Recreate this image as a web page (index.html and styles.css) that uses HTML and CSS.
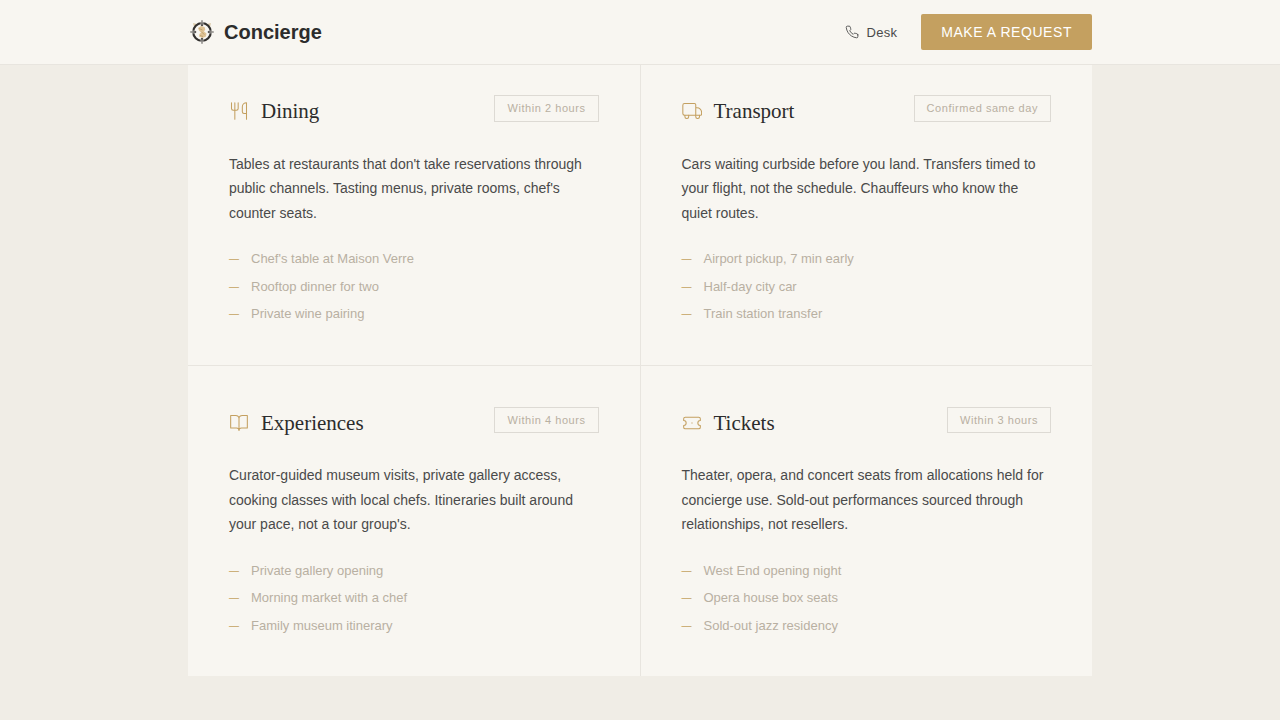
FILE: index.html
```html
<!DOCTYPE html>
<html lang="en">
<head>
    <meta charset="UTF-8">
    <meta name="viewport" content="width=device-width,initial-scale=1">
    <title>Concierge</title>
    <link rel="stylesheet" href="styles.css">
</head>
<body>
    <header class="header">
        <div class="header-inner">
            <a class="brand" href="#">
                <svg class="brand-mark" viewBox="0 0 28 28" aria-hidden="true">
                    <path d="M5 5l4 1-3 3zM23 5l-4 1 3 3z" fill="#dccbaa"/>
                    <circle cx="14" cy="14" r="8.800" fill="none" stroke="#33312f" stroke-width="2.200"/>
                    <path d="M14 3v6M14 19v6M3 14h6M19 14h6" stroke="#f8f6f1" stroke-width="2.600"/>
                    <path d="M14 2l.8 6h-1.600zM14 26l.8-6h-1.600zM2 14l6-.8v1.600zM26 14l-6-.8v1.600z" fill="#33312f" stroke="#33312f" stroke-width=".3"/>
                    <path d="M10 10l3-2 3.500 1 .8 2.500-1.300 2 2.500 2-.5 3-3.500 1.500-3.500-1.500.5-2.500 1.500-1.500-2-2z" fill="#dfc395"/>
                    <path d="M11 10.500l3.500 1.500M13.500 14l3 2.500M12 17.500l3 1" stroke="#b99a68" stroke-width=".8"/>
                </svg>
                <span>Concierge</span>
            </a>
            <nav class="nav">
                <a class="desk" href="#">
                    <svg class="icon-phone" viewBox="0 0 24 24" aria-hidden="true"><path d="M22 16.920v3a2 2 0 0 1-2.180 2 19.790 19.790 0 0 1-8.630-3.070 19.500 19.500 0 0 1-6-6 19.790 19.790 0 0 1-3.070-8.670A2 2 0 0 1 4.110 2h3a2 2 0 0 1 2 1.720c.127.960.361 1.903.7 2.810a2 2 0 0 1-.45 2.110L8.090 9.910a16 16 0 0 0 6 6l1.270-1.270a2 2 0 0 1 2.110-.45c.907.339 1.850.573 2.810.7A2 2 0 0 1 22 16.920z"/></svg>
                    <span>Desk</span>
                </a>
                <button class="btn" type="button">Make a request</button>
            </nav>
        </div>
    </header>

    <main class="services">
        <article class="card">
            <div class="card-head">
                <h2 class="card-title">
                    <svg class="icon" viewBox="0 0 24 24" aria-hidden="true"><path d="M3 2v7c0 1.100.9 2 2 2h4a2 2 0 0 0 2-2V2M7 2v20M21 15V2a5 5 0 0 0-5 5v6c0 1.100.9 2 2 2h3zm0 0v7"/></svg>
                    Dining
                </h2>
                <span class="badge">Within 2 hours</span>
            </div>
            <p class="card-text">Tables at restaurants that don't take reservations through public channels. Tasting menus, private rooms, chef's counter seats.</p>
            <ul class="card-list">
                <li>Chef's table at Maison Verre</li>
                <li>Rooftop dinner for two</li>
                <li>Private wine pairing</li>
            </ul>
        </article>

        <article class="card">
            <div class="card-head">
                <h2 class="card-title">
                    <svg class="icon" viewBox="0 0 24 24" aria-hidden="true"><path d="M3 17a2 2 0 0 1-2-2V5a2 2 0 0 1 2-2h12a1.500 1.500 0 0 1 1.500 1.500V17H3zM16.500 8H18a5.500 5.500 0 0 1 5.500 5.500V16a1 1 0 0 1-1 1h-6"/><path d="M3.500 17v2a2 2 0 0 0 2 2h.5a2 2 0 0 0 2-2v-2M16.500 17v2a2 2 0 0 0 2 2h.5a2 2 0 0 0 2-2v-2"/></svg>
                    Transport
                </h2>
                <span class="badge">Confirmed same day</span>
            </div>
            <p class="card-text">Cars waiting curbside before you land. Transfers timed to your flight, not the schedule. Chauffeurs who know the quiet routes.</p>
            <ul class="card-list">
                <li>Airport pickup, 7 min early</li>
                <li>Half-day city car</li>
                <li>Train station transfer</li>
            </ul>
        </article>

        <article class="card">
            <div class="card-head">
                <h2 class="card-title">
                    <svg class="icon" viewBox="0 0 24 24" aria-hidden="true"><path d="M2 3h6a4 4 0 0 1 4 4v14a3 3 0 0 0-3-3H2zM22 3h-6a4 4 0 0 0-4 4v14a3 3 0 0 1 3-3h7z"/></svg>
                    Experiences
                </h2>
                <span class="badge">Within 4 hours</span>
            </div>
            <p class="card-text">Curator-guided museum visits, private gallery access, cooking classes with local chefs. Itineraries built around your pace, not a tour group's.</p>
            <ul class="card-list">
                <li>Private gallery opening</li>
                <li>Morning market with a chef</li>
                <li>Family museum itinerary</li>
            </ul>
        </article>

        <article class="card">
            <div class="card-head">
                <h2 class="card-title">
                    <svg class="icon" viewBox="0 0 24 24" aria-hidden="true"><path d="M2 9a3 3 0 0 1 0 6v2a2 2 0 0 0 2 2h16a2 2 0 0 0 2-2v-2a3 3 0 0 1 0-6V7a2 2 0 0 0-2-2H4a2 2 0 0 0-2 2z"/><path d="M12 11.500v1" opacity=".6"/></svg>
                    Tickets
                </h2>
                <span class="badge">Within 3 hours</span>
            </div>
            <p class="card-text">Theater, opera, and concert seats from allocations held for concierge use. Sold-out performances sourced through relationships, not resellers.</p>
            <ul class="card-list">
                <li>West End opening night</li>
                <li>Opera house box seats</li>
                <li>Sold-out jazz residency</li>
            </ul>
        </article>
    </main>
</body>
</html>
```

FILE: styles.css
```css
* {
    box-sizing: border-box;
}
body {
    margin: 0;
    background: #f0ede6;
    color: #4a4a4a;
    font-family: "Liberation Sans", Arial, sans-serif;
    font-size: 14px;
}
a {
    color: inherit;
    text-decoration: none;
}
svg {
    fill: none;
    stroke-linecap: round;
    stroke-linejoin: round;
    flex-shrink: 0;
}

/* header */
.header {
    position: sticky;
    top: 0;
    z-index: 10;
    background: #f8f6f1;
    border-bottom: 1px solid #e8e5df;
}
.header-inner {
    display: flex;
    align-items: center;
    justify-content: space-between;
    max-width: 904px;
    height: 64px;
    margin: 0 auto;
}
.brand {
    display: flex;
    align-items: center;
    gap: 8px;
    color: #2c2c2c;
    font-size: 20px;
    font-weight: bold;
}
.brand-mark {
    width: 28px;
    height: 28px;
    stroke-linecap: butt;
}
.nav {
    display: flex;
    align-items: center;
    gap: 24px;
}
.desk {
    display: flex;
    align-items: center;
    gap: 8px;
    font-size: 13px;
    letter-spacing: 0.02em;
}
.icon-phone {
    width: 14px;
    height: 14px;
    stroke: #4a4a4a;
    stroke-width: 1.5;
}
.btn {
    height: 36px;
    padding: 0 20px;
    border: 0;
    border-radius: 2px;
    background: #c4a060;
    color: #fff;
    font-family: inherit;
    font-size: 14px;
    letter-spacing: 0.04em;
    text-transform: uppercase;
    cursor: pointer;
}

/* services, the 1px gap draws the lines between cards */
.services {
    display: grid;
    grid-template-columns: 1fr 1fr;
    gap: 1px;
    max-width: 904px;
    margin: -11px auto 44px;
    background: #e8e5df;
}
.card {
    padding: 40px;
    border: 1px solid #f8f6f1;
    background: #f8f6f1;
}
.card-head {
    display: flex;
    align-items: flex-start;
    justify-content: space-between;
    margin-bottom: 24px;
}
.card-title {
    display: flex;
    align-items: center;
    gap: 12px;
    margin: 0;
    color: #2c2c2c;
    font-family: "Liberation Serif", "Times New Roman", serif;
    font-size: 21px;
    font-weight: normal;
    line-height: 1.55;
}
.icon {
    width: 20px;
    height: 20px;
    stroke: #c4a060;
    stroke-width: 1.25;
}
.badge {
    padding: 4px 12px;
    border: 1px solid #dddad4;
    color: #b8b0a2;
    font-size: 11px;
    line-height: 1.5;
    letter-spacing: 0.05em;
}
.card-text {
    margin: 0 0 24px;
    line-height: 1.75;
}
.card-list {
    display: grid;
    gap: 8px;
    margin: 0;
    padding: 0;
    list-style: none;
    color: #b8b0a2;
    font-size: 13px;
    line-height: 1.5;
}
.card-list li {
    display: flex;
    align-items: center;
    gap: 12px;
}
.card-list li::before {
    content: "—";
    color: #c4a060;
    font-size: 10px;
}

@media (max-width: 760px) {
    .services {
        grid-template-columns: 1fr;
    }
}
```
